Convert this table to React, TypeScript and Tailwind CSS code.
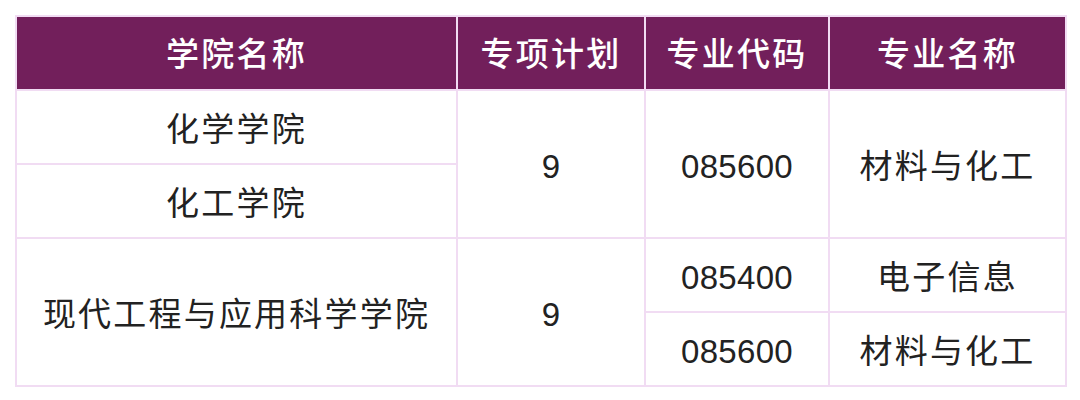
import React from 'react';

const border = 'border-2 border-[#f1dcf3]';
const cell = `${border} pt-[5px] text-center align-middle text-[#222222]`;
const num = `${cell} tracking-[0.3px]`;

export default function App() {
  return (
    <div className="w-[1080px] h-[400px] bg-white pt-[15px] pl-[15px]" style={{ fontFamily: '"Liberation Sans", "Noto Sans CJK SC", sans-serif' }}>
      <table className="border-collapse table-fixed text-[33px] tracking-[2.2px]">
        <colgroup>
          <col className="w-[441px]" />
          <col className="w-[188px]" />
          <col className="w-[184px]" />
          <col className="w-[237px]" />
        </colgroup>
        <thead>
          <tr className="h-[74px] bg-[#721f5b] text-white">
            <th className={`${border} pt-[4px] font-medium`}>学院名称</th>
            <th className={`${border} pt-[4px] font-medium`}>专项计划</th>
            <th className={`${border} pt-[4px] font-medium`}>专业代码</th>
            <th className={`${border} pt-[4px] font-medium`}>专业名称</th>
          </tr>
        </thead>
        <tbody>
          <tr className="h-[74px]">
            <td className={cell}>化学学院</td>
            <td className={num} rowSpan={2}>9</td>
            <td className={num} rowSpan={2}>085600</td>
            <td className={cell} rowSpan={2}>材料与化工</td>
          </tr>
          <tr className="h-[74px]">
            <td className={cell}>化工学院</td>
          </tr>
          <tr className="h-[74px]">
            <td className={cell} rowSpan={2}>现代工程与应用科学学院</td>
            <td className={num} rowSpan={2}>9</td>
            <td className={num}>085400</td>
            <td className={cell}>电子信息</td>
          </tr>
          <tr className="h-[74px]">
            <td className={num}>085600</td>
            <td className={cell}>材料与化工</td>
          </tr>
        </tbody>
      </table>
    </div>
  );
}
